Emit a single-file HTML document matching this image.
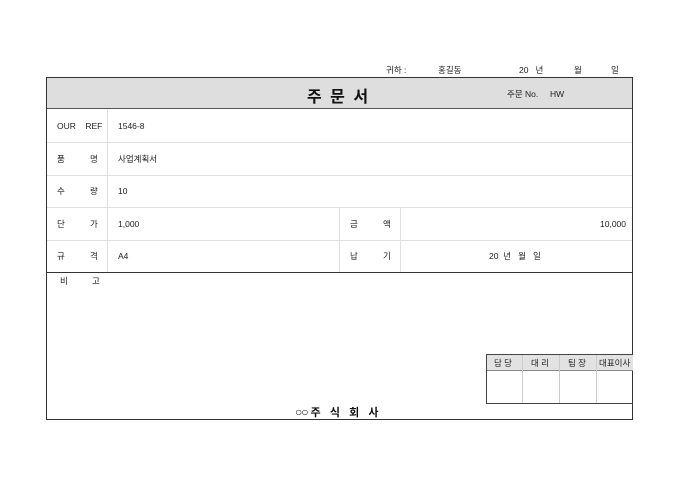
<!DOCTYPE html>
<html><head><meta charset="utf-8"><style>
*{margin:0;padding:0;box-sizing:border-box}
body{width:680px;height:481px;background:#fff;position:relative;font-family:"Liberation Sans","Noto Sans CJK KR",sans-serif;font-size:8.5px;color:#222;overflow:hidden}
.a{position:absolute;white-space:nowrap}
.h{position:absolute;height:1px;background:#e0e0e0}
.v{position:absolute;width:1px;background:#e0e0e0}
</style></head><body>
<div class="a" style="left:386px;top:64px">귀하 :</div>
<div class="a" style="left:438px;top:64px">홍길동</div>
<div class="a" style="left:519px;top:64px">20 &nbsp;&nbsp;년</div>
<div class="a" style="left:574px;top:64px">월</div>
<div class="a" style="left:611px;top:64px">일</div>

<div class="a" style="left:46px;top:77px;width:587px;height:343px;border:1px solid #333"></div>
<div class="a" style="left:47px;top:78px;width:585px;height:31px;background:#dedede;border-bottom:1px solid #555"></div>
<div class="a" style="left:307px;top:83px;font-size:16px;font-weight:bold;letter-spacing:2px;color:#111">주 문 서</div>
<div class="a" style="left:507px;top:88px">주문 No. &nbsp;&nbsp;&nbsp;&nbsp;HW</div>

<div class="h" style="left:47px;top:142px;width:585px"></div>
<div class="h" style="left:47px;top:175px;width:585px"></div>
<div class="h" style="left:47px;top:207px;width:585px"></div>
<div class="h" style="left:47px;top:240px;width:585px"></div>
<div class="a" style="left:47px;top:272px;width:585px;height:1px;background:#333"></div>
<div class="v" style="left:107px;top:110px;height:162px"></div>
<div class="v" style="left:339px;top:208px;height:64px"></div>
<div class="v" style="left:400px;top:208px;height:64px"></div>

<div class="a" style="left:57px;top:121px">OUR &nbsp;&nbsp;&nbsp;REF</div>
<div class="a" style="left:118px;top:121px">1546-8</div>
<div class="a" style="left:57px;top:153px">품</div><div class="a" style="left:90px;top:153px">명</div>
<div class="a" style="left:118px;top:153px">사업계획서</div>
<div class="a" style="left:57px;top:185px">수</div><div class="a" style="left:90px;top:185px">량</div>
<div class="a" style="left:118px;top:186px">10</div>
<div class="a" style="left:57px;top:218px">단</div><div class="a" style="left:90px;top:218px">가</div>
<div class="a" style="left:118px;top:219px">1,000</div>
<div class="a" style="left:350px;top:218px">금</div><div class="a" style="left:383px;top:218px">액</div>
<div class="a" style="left:600px;top:219px">10,000</div>
<div class="a" style="left:57px;top:250px">규</div><div class="a" style="left:90px;top:250px">격</div>
<div class="a" style="left:118px;top:251px">A4</div>
<div class="a" style="left:350px;top:250px">납</div><div class="a" style="left:383px;top:250px">기</div>
<div class="a" style="left:489px;top:250px">20 &nbsp;년 &nbsp;&nbsp;월 &nbsp;&nbsp;일</div>
<div class="a" style="left:60px;top:275px">비</div><div class="a" style="left:92px;top:275px">고</div>

<div class="a" style="left:486px;top:354px;width:147px;height:50px;border:1px solid #444;border-right:none"></div>
<div class="a" style="left:487px;top:355px;width:146px;height:16px;background:#e2e2e2;border-bottom:1px solid #888"></div>
<div class="v" style="left:522px;top:355px;height:48px;background:#ccc"></div>
<div class="v" style="left:559px;top:355px;height:48px;background:#ccc"></div>
<div class="v" style="left:596px;top:355px;height:48px;background:#ccc"></div>
<div class="a" style="left:494px;top:357px">담 당</div>
<div class="a" style="left:531px;top:357px">대 리</div>
<div class="a" style="left:568px;top:357px">팀 장</div>
<div class="a" style="left:599px;top:357px">대표이사</div>

<div class="a" style="left:295px;top:404px;font-size:11px;font-weight:bold;color:#111"><span style="font-weight:normal;font-size:12px;letter-spacing:-1px">○○</span> 주 &nbsp;&nbsp;식 &nbsp;&nbsp;회 &nbsp;&nbsp;사</div>
</body></html>
